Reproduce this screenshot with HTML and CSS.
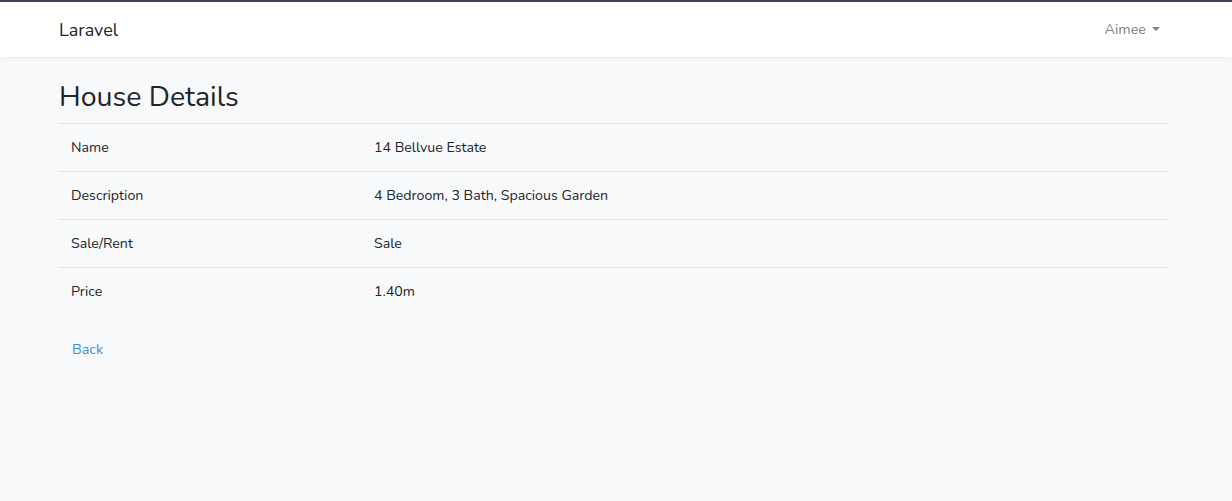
FILE: index.html
```html
<!DOCTYPE html>
<html lang="en">
<head>
<meta charset="utf-8">
<title>Laravel</title>
<link rel="stylesheet" href="styles.css">
</head>
<body>
<div class="app">
  <nav class="navbar">
    <div class="container nav-inner">
      <a class="brand" href="#">Laravel</a>
      <a class="user" href="#">Aimee <span class="caret"></span></a>
    </div>
  </nav>
  <main class="container main">
    <h1 class="title">House Details</h1>
    <table class="table">
      <tbody>
        <tr><td class="label">Name</td><td>14 Bellvue Estate</td></tr>
        <tr><td class="label">Description</td><td>4 Bedroom, 3 Bath, Spacious Garden</td></tr>
        <tr><td class="label">Sale/Rent</td><td>Sale</td></tr>
        <tr><td class="label">Price</td><td>1.40m</td></tr>
      </tbody>
    </table>
    <a class="back" href="#">Back</a>
  </main>
</div>
</body>
</html>
```

FILE: styles.css
```css
* { box-sizing: border-box; }
html, body { margin: 0; padding: 0; }
body {
  background: #f8f9fb;
  font-family: "Nunito", "Lato", "Noto Sans", sans-serif;
  font-size: 14.4px;
  line-height: 1.6;
  color: #212529;
  height: 501px;
  overflow: hidden;
}
.app { border-top: 2px solid #4a3a66; }
.container {
  width: 1114px;
  margin-left: 59px;
}
.navbar {
  background: #fff;
  height: 55px;
  box-shadow: 0 2px 4px rgba(0,0,0,0.05);
}
.nav-inner {
  display: flex;
  align-items: center;
  justify-content: space-between;
  height: 55px;
}
.brand {
  font-size: 18px;
  color: #212529;
  text-decoration: none;
  padding-top: 2px;
}
.user {
  color: #808285;
  text-decoration: none;
  font-size: 14.4px;
  display: flex;
  align-items: center;
  gap: 6px;
  margin-right: 13px;
  padding-top: 1px;
}
.caret {
  width: 0; height: 0;
  border-left: 4px solid transparent;
  border-right: 4px solid transparent;
  border-top: 4.5px solid #808285;
  margin-top: -2px;
}
.main { padding-top: 23px; }
.title {
  font-size: 28.5px;
  font-weight: 400;
  line-height: 1.2;
  margin: 0 0 9px;
  color: #212529;
}
.table {
  width: 1110px;
  border-collapse: collapse;
}
.table td {
  border-top: 1px solid #dee2e6;
  padding: 13px 12px 9px;
  height: 48px;
  vertical-align: top;
  font-size: 14.2px;
}
.table td.label { width: 303px; }
.back {
  display: inline-block;
  margin-top: 22px;
  margin-left: 13px;
  color: #3490dc;
  text-decoration: none;
  font-size: 14.4px;
}
```
